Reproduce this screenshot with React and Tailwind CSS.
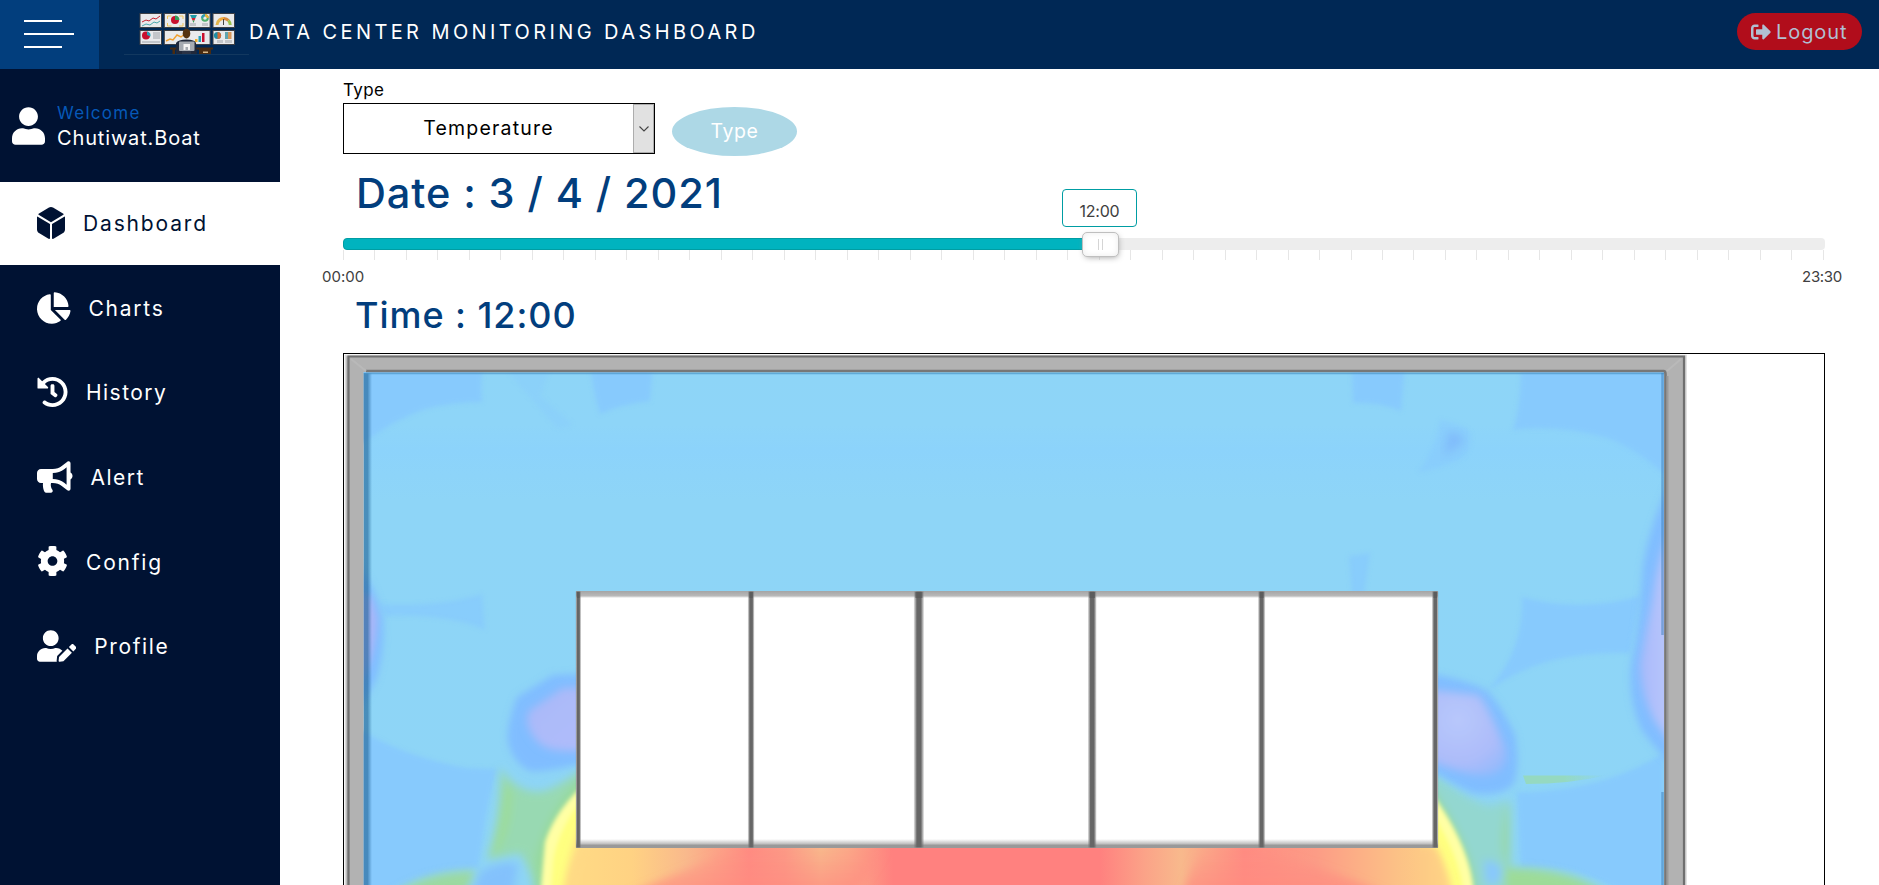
import {
  FaUser, FaDiceD6, FaChartPie, FaHistory, FaBullhorn, FaCog, FaUserEdit, FaSignOutAlt,
} from "react-icons/fa";

const menu = [
  { label: "Dashboard", Icon: FaDiceD6, icon: "w-[28px]", text: "tracking-[1.85px]", active: true },
  { label: "Charts", Icon: FaChartPie, icon: "w-[33.5px]", text: "tracking-[1.75px]" },
  { label: "History", Icon: FaHistory, icon: "w-[31px]", text: "tracking-[1.46px]" },
  { label: "Alert", Icon: FaBullhorn, icon: "w-[35.5px]", text: "tracking-[1.49px]" },
  { label: "Config", Icon: FaCog, icon: "w-[31px]", text: "tracking-[1.8px]" },
  { label: "Profile", Icon: FaUserEdit, icon: "w-[39.3px]", text: "tracking-[1.6px]" },
];

function Logo() {
  const screens = [[140, 13.5], [164.3, 13.5], [188.6, 13.5], [213, 13.5], [140, 30.5], [213, 30.5]];
  return (
    <svg className="h-[69px] w-[125px] shrink-0" viewBox="124 0 125 69">
      {screens.map(([x, y]) => (
        <rect key={x + "-" + y} x={x} y={y} width="21.5" height="14" fill="#e9eaec" stroke="#3c3f45" strokeWidth="1" />
      ))}
      <rect x="164.3" y="30.5" width="45.8" height="14" fill="#e9eaec" stroke="#3c3f45" strokeWidth="1" />
      <g fill="none" strokeWidth="1">
        <path d="M142 22l4-2 3 1 4-3 3 1 4-3" stroke="#c4202f" />
        <path d="M142 26l4-2 4 1 4-3 3 1 3-2" stroke="#4aa7ad" />
        <path d="M167.500 19v-3h4M179 16h4v3M183 23v3h-4M171.500 26h-4v-3" stroke="#f3c65a" />
        <path d="M166 41l4-2 3 1 4-5 4 2 5-4" stroke="#f0a030" strokeWidth="1.400" />
      </g>
      <circle cx="175" cy="20" r="4" fill="#c8102e" />
      <path d="M175 20v-4.500a4.500 4.500 0 0 1 4.500 4.500z" fill="#35a05c" />
      <path d="M190 15h7l-1.500 3h-4z" fill="#1f9aa5" />
      <path d="M191.500 18h4l-1 2.500h-2z" fill="#d02030" />
      <path d="M192.500 20.500h2L193.500 23z" fill="#2d9b4f" />
      <circle cx="205" cy="18" r="2.800" fill="none" stroke="#4cae6b" strokeWidth="2" />
      <path d="M202.200 18a2.800 2.800 0 0 1 2.800-2.800" fill="none" stroke="#2e9bb5" strokeWidth="2" />
      <path d="M205 15.200a2.800 2.800 0 0 1 2.800 2.800" fill="none" stroke="#f0b030" strokeWidth="2" />
      <path d="M190 23h6v3h-6zM202 23h6v3h-6zM217 40h6v3h-6zM225 40h7v3h-7zM153 32h7v7h-7zM142 41h18v2h-18z" fill="#c3c6ca" />
      <g fill="none" strokeWidth="3">
        <path d="M217 25a6.500 6.500 0 0 1 2.500-5" stroke="#e2b54a" />
        <path d="M219.500 20a6.500 6.500 0 0 1 4.500-1.500" stroke="#efa93b" />
        <path d="M224 18.500a6.500 6.500 0 0 1 4.500 2" stroke="#d98a3c" />
        <path d="M228.500 20.500a6.500 6.500 0 0 1 1.700 4.500" stroke="#9bc24b" />
      </g>
      <path d="M223.500 19v6" stroke="#444" strokeWidth="1" />
      <circle cx="146" cy="35.500" r="4" fill="#c8102e" />
      <path d="M147 35v-3.500a4 4 0 0 1 3.500 5z" fill="#2aa0b8" />
      <path d="M195 39h2.500v3H195z" fill="#f0b030" />
      <path d="M198.500 36h2.500v6h-2.500z" fill="#2aa0b8" />
      <path d="M202 33h2.500v9H202z" fill="#c8102e" />
      <circle cx="217.500" cy="35.500" r="3.600" fill="#1f8ea5" />
      <path d="M217.500 35.500v-3.600a3.600 3.600 0 0 1 0 7.200z" fill="#d46a35" />
      <path d="M225 32h3v7h-3z" fill="#5fa5b0" />
      <path d="M228 32h3.500v7H228z" fill="#d9985a" />
      <path d="M170 47.500h43v2h-2V54h-12v-4.500h-24V54h-2.500v-4.500H170z" fill="#4a2b10" />
      <path d="M203 51.500h5v1.500h-5z" fill="#d9b98a" />
      <path d="M176 43q2-3.500 10.500-3.500T196 43l1 11h-21z" fill="#20283a" />
      <ellipse cx="186.500" cy="33.500" rx="3.800" ry="5" fill="#553210" />
      <rect x="179" y="41.500" width="15.500" height="9.500" rx="1" fill="#a6abb2" />
      <path d="M183.500 44h6.500v6h-2v-3h-2.500v3h-2z" fill="#f4f4f4" />
      <path d="M182 51h9v3h-9z" fill="#2a3346" />
      <path d="M124 54.500h125" stroke="#12385f" strokeWidth="1" />
    </svg>
  );
}

function HeatMap() {
  const racks = [[577, 2.5], [749.4, 3.4], [915.4, 7], [1089.5, 5.5], [1259.6, 4], [1433.5, 3.5]];
  return (
    <svg className="block h-[532px] w-[1345px]" viewBox="344 354 1345 532">
      <defs>
        <filter id="soft" x="-20%" y="-20%" width="140%" height="140%"><feGaussianBlur stdDeviation="2" /></filter>
        <filter id="halo" x="-20%" y="-20%" width="140%" height="140%"><feGaussianBlur stdDeviation="3.5" /></filter>
        <filter id="mid" x="-20%" y="-20%" width="140%" height="140%"><feGaussianBlur stdDeviation="4" /></filter>
        <linearGradient id="base" x1="0" x2="0" y1="373" y2="885" gradientUnits="userSpaceOnUse">
          <stop offset="0" stopColor="#8ed5f7" /><stop offset=".1" stopColor="#8ed5f8" />
          <stop offset=".15" stopColor="#8cd3fb" /><stop offset=".2" stopColor="#8dd4f9" />
          <stop offset=".25" stopColor="#8ed5f7" />
          <stop offset="1" stopColor="#8ed5f6" />
        </linearGradient>
        <linearGradient id="heat" x1="560" x2="1460" y1="0" y2="0" gradientUnits="userSpaceOnUse">
          <stop offset="0" stopColor="#ffdc85" /><stop offset=".08" stopColor="#ffd283" />
          <stop offset=".14" stopColor="#f9b98c" /><stop offset=".21" stopColor="#ff8c82" />
          <stop offset=".25" stopColor="#fc9a86" /><stop offset=".29" stopColor="#f8b98c" />
          <stop offset=".32" stopColor="#fba988" /><stop offset=".37" stopColor="#ff817f" />
          <stop offset=".6" stopColor="#ff817f" /><stop offset=".65" stopColor="#fba388" />
          <stop offset=".69" stopColor="#f8b98c" /><stop offset=".76" stopColor="#ff8c82" />
          <stop offset=".84" stopColor="#fc9c86" /><stop offset=".93" stopColor="#fcc186" />
          <stop offset="1" stopColor="#ffd884" />
        </linearGradient>
        <linearGradient id="redfade" x1="0" x2="0" y1="847" y2="885" gradientUnits="userSpaceOnUse">
          <stop offset="0" stopColor="#ff8a80" stopOpacity="0" /><stop offset="1" stopColor="#ff8a80" stopOpacity=".65" />
        </linearGradient>
        <linearGradient id="shadeL" x1="363" x2="372" y1="0" y2="0" gradientUnits="userSpaceOnUse">
          <stop offset="0" stopColor="#1c5f92" stopOpacity=".6" /><stop offset=".5" stopColor="#1c5f92" stopOpacity=".6" />
          <stop offset="1" stopColor="#1c5f92" stopOpacity="0" />
        </linearGradient>
        <linearGradient id="rackTop" x1="0" x2="0" y1="591" y2="598" gradientUnits="userSpaceOnUse">
          <stop offset="0" stopColor="#a5a5a5" /><stop offset=".7" stopColor="#b9b9b9" /><stop offset="1" stopColor="#fff" />
        </linearGradient>
        <linearGradient id="rackBottom" x1="0" x2="0" y1="839" y2="848" gradientUnits="userSpaceOnUse">
          <stop offset="0" stopColor="#fff" /><stop offset=".5" stopColor="#c4c4c4" /><stop offset=".7" stopColor="#999" />
          <stop offset="1" stopColor="#999" />
        </linearGradient>
        <linearGradient id="bar" x1="0" x2="1" y1="0" y2="0">
          <stop offset="0" stopColor="#777" stopOpacity=".2" /><stop offset=".3" stopColor="#666" />
          <stop offset=".7" stopColor="#666" /><stop offset="1" stopColor="#777" stopOpacity=".2" />
        </linearGradient>
        <linearGradient id="violetL" x1="520" x2="577" y1="690" y2="760" gradientUnits="userSpaceOnUse">
          <stop offset="0" stopColor="#a9b9f8" /><stop offset="1" stopColor="#b0bcfa" />
        </linearGradient>
        <radialGradient id="violetR" cx="1458" cy="720" r="60" gradientUnits="userSpaceOnUse">
          <stop offset="0" stopColor="#b8c8fb" /><stop offset=".7" stopColor="#adbcf9" /><stop offset="1" stopColor="#98bafc" />
        </radialGradient>
        <linearGradient id="violetEdge" x1="1635" x2="1664" y1="0" y2="0" gradientUnits="userSpaceOnUse">
          <stop offset="0" stopColor="#a5b7fa" /><stop offset="1" stopColor="#b6c4fb" />
        </linearGradient>
        <linearGradient id="sliver" x1="1523" x2="1605" y1="0" y2="0" gradientUnits="userSpaceOnUse">
          <stop offset="0" stopColor="#95d9c0" /><stop offset=".5" stopColor="#95d9c0" />
          <stop offset="1" stopColor="#95d9c0" stopOpacity="0" />
        </linearGradient>
        <clipPath id="room"><rect x="363.500" y="372" width="1300.500" height="514" /></clipPath>
      </defs>

      <g clipPath="url(#room)">
        <rect x="363" y="372" width="1302" height="514" fill="url(#base)" />
        <g fill="#87cafd" filter="url(#soft)">
          <path d="M355 365H483Q480 385 482 402Q450 402 423 410Q395 420 372 437L355 448z" />
          <path d="M510 365H550Q546 380 540 396L572 424Q565 430 556 427Q540 408 510 374z" opacity=".4" />
          <path d="M590 365H653L650 401Q622 404 600 414Q594 396 590 365z" />
          <path d="M380 604Q440 607 482 594L485 630Q450 614 385 616z" opacity=".8" />
          <path d="M355 726Q400 756 467 768L497 769Q487 802 482 844L478 868Q430 871 395 890H355z" />
          <path d="M1352 365H1405L1401 411Q1380 402 1353 403z" />
          <path d="M1521 365H1675V484Q1640 450 1607 438Q1560 425 1513 430Q1521 405 1521 365z" />
          <path d="M1440 420Q1462 424 1470 432Q1474 448 1460 459Q1442 468 1418 472Q1436 450 1440 420z" opacity=".6" />
          <path d="M1349 556L1370 553L1364 595H1352z" opacity=".8" />
          <path d="M1522 597Q1580 613 1640 596L1630 653Q1585 652 1550 661Q1520 669 1488 690Q1524 650 1522 597z" />
          <path d="M1517 792Q1600 792 1664 753V890H1620Q1570 864 1521 868z" />
        </g>
        <path d="M1448 432Q1462 432 1464 442L1444 456z" fill="#80bcfb" filter="url(#mid)" />

        <g filter="url(#halo)">
          <path d="M355 560Q376 588 383 618Q385 650 376 680L355 718z" fill="#80bdff" />
          <path d="M355 590L371 597L377 618Q376 648 366 672L355 690z" fill="#a8b6f8" />
          <path d="M1690 440Q1652 510 1643 566Q1640 620 1631 665Q1628 700 1641 729Q1654 748 1690 785z" fill="#80bdff" />
        </g>
        <path d="M1680 505Q1658 550 1652 601Q1644 640 1640 665Q1641 695 1654 720L1680 756z" fill="url(#violetEdge)" filter="url(#mid)" />

        <g filter="url(#mid)">
          <path d="M500 768Q520 796 545 791Q565 784 600 755V900H536Q534 875 520 853L488 860Q502 815 500 768z" fill="#98d9b2" />
          <path d="M503 782L513 792Q512 828 500 848L488 858Q500 820 503 782z" fill="#9cdb9c" />
          <path d="M1425 765Q1465 800 1490 806L1508 800L1512 900H1425z" fill="#93d7d0" />
          <path d="M1510 800V880L1502 850Q1500 825 1510 800z" fill="#98d8a8" />
          <path d="M384 900Q425 870 476 871L462 900z" fill="#9bd9a0" />
          <path d="M1505 868Q1575 866 1615 900H1505z" fill="#9ddb98" />
          <path d="M480 872Q500 860 518 864L512 900H470z" fill="#83c1fc" />
          <path d="M1484 860Q1496 860 1502 870L1498 884H1486z" fill="#88c8fd" />
          <path d="M600 762Q548 800 535 860L534 900H700L1330 900H1477Q1476 845 1415 765z" fill="#97d99c" />
        </g>
        <g filter="url(#soft)">
          <path d="M590 779Q556 808 545 842L540 900H1474Q1474 848 1425 784z" fill="#ffffa4" />
          <path d="M590 789Q558 826 553 860L550 900H1464Q1464 858 1425 802z" fill="#ffff80" />
        </g>
        <path d="M598 800Q568 840 564 900H1452Q1448 868 1416 820z" fill="#ffd985" filter="url(#mid)" />
        <path d="M582 855L1435 846Q1448 870 1450 900H566Q568 870 582 855z" fill="url(#heat)" filter="url(#mid)" />
        <rect x="590" y="843" width="830" height="50" fill="url(#heat)" />
        <path d="M615 900Q680 872 740 846H890L850 900zM1400 900Q1340 872 1250 846H1200L1180 900z" fill="url(#redfade)" filter="url(#mid)" />

        <g filter="url(#halo)">
          <path d="M600 673L553 675L517 697Q506 725 508 742Q512 762 530 771Q550 773 600 758z" fill="#80bdff" />
          <path d="M1415 671Q1470 680 1487 691Q1500 703 1515 735Q1520 765 1514 783Q1503 797 1473 793Q1455 786 1415 760z" fill="#80bdff" />
        </g>
        <g filter="url(#mid)">
          <path d="M600 688L563 688L529 711Q523 726 538 742Q552 756 600 748z" fill="url(#violetL)" />
          <path d="M1415 688L1478 695Q1486 701 1506 750Q1509 767 1493 774Q1475 781 1415 755z" fill="url(#violetR)" />
        </g>
        <path d="M1523 775.500H1605Q1570 784 1526 784z" fill="url(#sliver)" />

        <rect x="363" y="373" width="9" height="513" fill="url(#shadeL)" />
        <path d="M364 373.500H1664" stroke="#4c97c9" strokeWidth="1.500" opacity=".7" />
        <path d="M1662.500 373V635M1662.500 792V886" stroke="#3b7db8" strokeWidth="2.500" opacity=".5" />
      </g>

      <path d="M345.500 886V355.500H1686V886H1664V372H363.500V886z" fill="#b2b2b2" />
      <path d="M345.500 886V355.500H1686V886" fill="none" stroke="#d9d9d9" strokeWidth="1.500" />
      <path d="M348.500 886V356.500H1684V886" fill="none" stroke="#6f6f6f" strokeWidth="2.200" />
      <path d="M366 371H1663.500Q1665.500 371 1665.500 374V886" fill="none" stroke="#777" strokeWidth="2.500" />
      <path d="M1667.500 376V886" stroke="#9a9a9a" strokeWidth="2" />
      <path d="M351 359L366 371M1681 359L1667 371" stroke="#b9b9b9" strokeWidth="2" />

      <rect x="576" y="591.500" width="862" height="256" fill="#fff" />
      <rect x="576" y="591" width="862" height="7" fill="url(#rackTop)" />
      <rect x="576" y="839" width="862" height="9" fill="url(#rackBottom)" />
      {racks.map(([x, w]) => (
        <g key={x}>
          <rect x={x - 1.5} y="591.5" width={w + 3} height="256" fill="url(#bar)" />
          <rect x={x} y="592" width={w} height="6" fill="#555" opacity=".6" />
        </g>
      ))}
    </svg>
  );
}

export default function App() {
  const ticks = Array.from({ length: 48 }, (_, i) => i);
  return (
    <div className="flex h-[885px] w-full flex-col overflow-hidden bg-white font-['Inter',sans-serif] font-normal [font-feature-settings:'calt'_0]">
      <header className="flex h-[69px] shrink-0 items-center bg-[#002855]">
        <button className="flex h-full w-[99px] flex-col items-start gap-[10.5px] bg-[#023e7d] pt-5 pl-6">
          <span className="h-[2px] w-[38px] bg-white" />
          <span className="h-[2.5px] w-[50px] bg-white" />
          <span className="h-[2px] w-[38px] bg-white" />
        </button>
        <div className="ml-[25px] flex items-center">
          <Logo />
          <h1 className="-mt-[5px] text-[20px] leading-[30px] tracking-[3.4px] whitespace-nowrap text-white">DATA CENTER MONITORING DASHBOARD</h1>
        </div>
        <button className="mt-[-6px] mr-[17px] ml-auto flex h-[37px] w-[125px] items-center gap-[5px] rounded-full bg-[#b10d1b] pl-[14px] text-[#b1bfd2]">
          <FaSignOutAlt className="h-5 w-5 shrink-0" />
          <span className="text-[20px] tracking-[0.92px]">Logout</span>
        </button>
      </header>

      <div className="flex min-h-0 flex-1">
        <aside className="w-[280px] shrink-0 bg-[#001233]">
          <div className="flex h-[113px] items-center pl-3 text-white">
            <FaUser className="h-[38px] w-[33px] shrink-0" />
            <div className="ml-3 flex flex-col">
              <span className="text-[17px] leading-[26px] tracking-[1.3px] text-[#0659b8]">Welcome</span>
              <span className="text-[20px] leading-[25px] tracking-[0.85px]">Chutiwat.Boat</span>
            </div>
          </div>
          <nav className="flex flex-col gap-[1.6px]">
            {menu.map(({ label, Icon, icon, text, active }) => (
              <a key={label} className={"flex h-[83px] items-center gap-[18px] pl-[37px] " + (active ? "bg-white text-[#001233]" : "text-white")}>
                <Icon className={"-mt-[1px] h-[32px] shrink-0 " + icon} />
                <span className={"pt-px text-[21px] " + text}>{label}</span>
              </a>
            ))}
          </nav>
        </aside>

        <main className="flex min-w-0 flex-1 flex-col pt-2 pr-[54px] pl-[63px]">
          <label className="h-[26px] text-[17px] leading-[27px] tracking-[0.38px] text-black">Type</label>
          <div className="flex h-[54px] items-start gap-[17px]">
            <div className="flex h-[51px] w-[312px] items-stretch border border-black">
              <span className="flex flex-1 items-center justify-center pt-px text-[19.5px] tracking-[1.2px] text-black">Temperature</span>
              <span className="flex w-[21px] items-center justify-center border border-[#adadad] bg-[#e1e1e1]">
                <svg className="h-[6px] w-[10px]" viewBox="0 0 10 6" fill="none" stroke="#444" strokeWidth="1.100"><path d="M.5 .5L5 5L9.500 .5" /></svg>
              </span>
            </div>
            <button className="mt-1 flex h-[49px] w-[125px] items-center justify-center rounded-[50%] bg-[#add8e6] text-[19.5px] tracking-[0.58px] text-white">Type</button>
          </div>
          <h2 className="h-[72px] pl-[13px] text-[41.5px] leading-[72px] font-medium tracking-[0.9px] text-[#023e7d]">Date : 3 / 4 / 2021</h2>
          <div className="h-[63px] pt-[9px]">
            <div className="relative h-3 rounded bg-[#ededed]">
              <div className="h-3 w-[757px] rounded-l border border-[#009da3] bg-[#00b3bf]" />
              <div className="absolute -top-[49px] left-[719px] flex h-[38px] w-[75px] items-center justify-center rounded border border-[#009da3] bg-white pt-[6px] text-[16px] tracking-[-0.24px] text-[#404040]">12:00</div>
              <div className="absolute -top-[6px] left-[739px] flex h-[25px] w-[37px] items-center justify-center gap-[3px] rounded-[5px] border border-[#bfbfbf] bg-white shadow-[inset_0_0_6px_#ececec,1px_2px_6px_-2px_#999]">
                <span className="h-[11px] w-px bg-[#d5d5d5]" />
                <span className="h-[11px] w-px bg-[#d5d5d5]" />
              </div>
            </div>
            <div className="flex h-[10px] justify-between pr-px">
              {ticks.map((t) => <span key={t} className="w-px bg-[#e6e6e6]" />)}
            </div>
            <div className="-mr-[17px] -ml-[21px] flex h-[33px] items-center justify-between pt-px text-[15px] text-[#404040]">
              <span>00:00</span>
              <span className="tracking-[-0.3px]">23:30</span>
            </div>
          </div>
          <h2 className="mb-[15px] h-[46px] shrink-0 pl-[12px] text-[36px] leading-[46px] font-medium tracking-[0.95px] text-[#023e7d]">Time : 12:00</h2>
          <div className="min-h-0 flex-1 overflow-hidden border border-b-0 border-black">
            <HeatMap />
          </div>
        </main>
      </div>
    </div>
  );
}
